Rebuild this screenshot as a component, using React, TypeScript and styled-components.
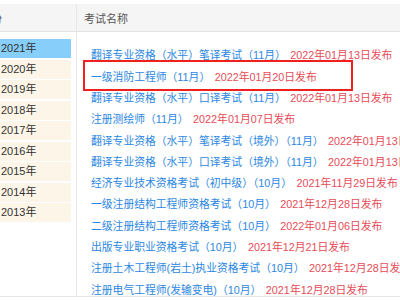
import React from "react";
import styled, { createGlobalStyle } from "styled-components";

const Global = createGlobalStyle`
  html, body { margin: 0; padding: 0; background: #fff; }
  body { width: 400px; height: 300px; overflow: hidden; }
`;

const Page = styled.div`
  width: 400px;
  height: 300px;
  overflow: hidden;
  padding-top: 4px;
  box-sizing: border-box;
  font-family: "Liberation Sans", "Noto Sans CJK SC", sans-serif;
`;

const Table = styled.div`
  display: grid;
  grid-template-columns: 77px 1fr;
  grid-template-rows: 28px 265px;
  width: 430px;
`;

const HeadCell = styled.div<{ $first?: boolean }>`
  background: #f5f5f5;
  border-bottom: 1px solid #e2e2e2;
  border-right: ${(p) => (p.$first ? "1px solid #e6e6e6" : "none")};
  font-size: 11px;
  color: #555;
  display: flex;
  align-items: center;
  padding-left: ${(p) => (p.$first ? "0" : "7px")};
  overflow: hidden;
  white-space: nowrap;
`;

const ClippedLabel = styled.span`
  margin-left: -20px;
  color: #444;
`;

const BodyCell = styled.div<{ $first?: boolean }>`
  border-right: ${(p) => (p.$first ? "1px solid #e6e6e6" : "none")};
  border-bottom: 1px solid #e6e6e6;
  overflow: hidden;
  padding-top: ${(p) => (p.$first ? "7px" : "13.4px")};
  padding-left: ${(p) => (p.$first ? "0" : "14px")};
  display: flex;
  flex-direction: column;
  gap: ${(p) => (p.$first ? "1.5px" : "0")};
`;

const Year = styled.div<{ $active?: boolean }>`
  width: 71px;
  height: 19px;
  line-height: 19px;
  padding-left: 1px;
  box-sizing: border-box;
  background: ${(p) => (p.$active ? "#87cefa" : "#fdf5e8")};
  color: #333;
  font-size: 11px;
  flex: none;
`;

const Row = styled.div`
  position: relative;
  height: 21.3px;
  line-height: 21.3px;
  font-size: 10.8px;
  white-space: nowrap;
  flex: none;
`;

const Title = styled.span`
  color: #2c87e2;
`;

const DateText = styled.span`
  color: #e64b57;
  margin-left: 4.5px;
`;

const Mark = styled.div`
  position: absolute;
  left: -8px;
  top: -6.5px;
  width: 270px;
  height: 31px;
  box-sizing: border-box;
  border: 2px solid #f0201f;
  pointer-events: none;
`;

const years = ["2021", "2020", "2019", "2018", "2017", "2016", "2015", "2014", "2013"];

const rows: { t: string; d: string; mark?: boolean }[] = [
  { t: "翻译专业资格（水平）笔译考试（11月）", d: "2022年01月13日发布" },
  { t: "一级消防工程师（11月）", d: "2022年01月20日发布", mark: true },
  { t: "翻译专业资格（水平）口译考试（11月）", d: "2022年01月13日发布" },
  { t: "注册测绘师（11月）", d: "2022年01月07日发布" },
  { t: "翻译专业资格（水平）笔译考试（境外）（11月）", d: "2022年01月13日发布" },
  { t: "翻译专业资格（水平）口译考试（境外）（11月）", d: "2022年01月13日发布" },
  { t: "经济专业技术资格考试（初中级）（10月）", d: "2021年11月29日发布" },
  { t: "一级注册结构工程师资格考试（10月）", d: "2021年12月28日发布" },
  { t: "二级注册结构工程师资格考试（10月）", d: "2022年01月06日发布" },
  { t: "出版专业职业资格考试（10月）", d: "2021年12月21日发布" },
  { t: "注册土木工程师(岩土)执业资格考试（10月）", d: "2021年12月28日发布" },
  { t: "注册电气工程师(发输变电)（10月）", d: "2021年12月28日发布" },
];

export default function App() {
  return (
    <Page>
      <Global />
      <Table>
        <HeadCell $first>
          <ClippedLabel>年份</ClippedLabel>
        </HeadCell>
        <HeadCell>考试名称</HeadCell>
        <BodyCell $first>
          {years.map((y, i) => (
            <Year key={y} $active={i === 0}>
              {y}年
            </Year>
          ))}
        </BodyCell>
        <BodyCell>
          {rows.map((r, i) => (
            <Row key={i}>
              <Title>{r.t}</Title>
              <DateText>{r.d}</DateText>
              {r.mark && <Mark />}
            </Row>
          ))}
        </BodyCell>
      </Table>
    </Page>
  );
}
